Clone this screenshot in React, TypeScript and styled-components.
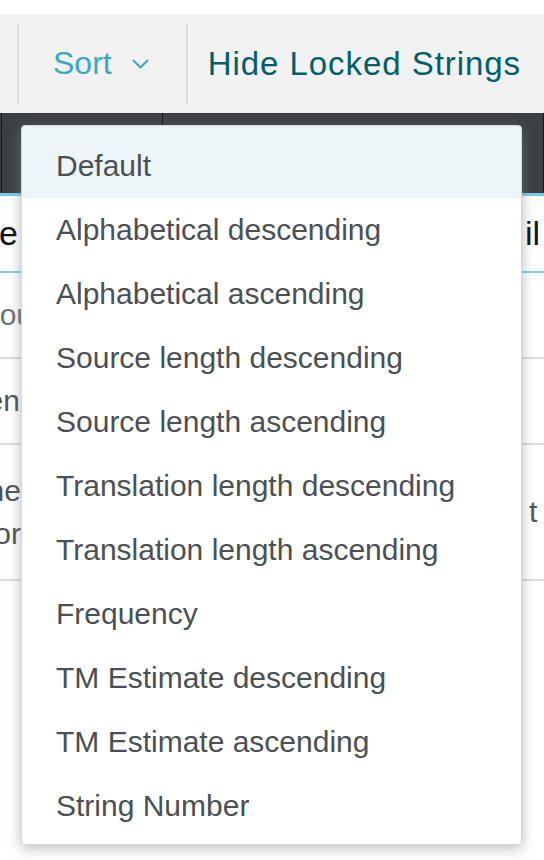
import styled, { createGlobalStyle } from 'styled-components';

// Sort options shown in the open dropdown
const sortOptions: string[] = [
	'Default',
	'Alphabetical descending',
	'Alphabetical ascending',
	'Source length descending',
	'Source length ascending',
	'Translation length descending',
	'Translation length ascending',
	'Frequency',
	'TM Estimate descending',
	'TM Estimate ascending',
	'String Number',
];

const GlobalStyle = createGlobalStyle`
	html, body {
		margin: 0;
		background: #ffffff;
		font-family: 'Liberation Sans', Arial, sans-serif;
	}
`;

const Chevron = () => (
	<svg width='17' height='11' viewBox='0 0 17 11' fill='none'>
		<polyline points='1.5,1.5 8.5,8.5 15.5,1.5' stroke='#3ba8c3' strokeWidth='2' strokeLinecap='round' strokeLinejoin='round' />
	</svg>
);

export default function App() {
	const selected = 0;

	return (
		<Page>
			<GlobalStyle />
			<Toolbar>
				<Divider />
				<SortButton>
					<span>Sort</span>
					<Chevron />
				</SortButton>
				<Divider />
				<HideButton>Hide Locked Strings</HideButton>
			</Toolbar>

			<Table>
				<HeadBand>
					<HeadCell />
					<HeadCell />
					<HeadCell />
				</HeadBand>
				<HeaderRow>
					<EdgeLeft $pad={15}>Source</EdgeLeft>
					<Middle />
					<EdgeRight $pad={3}>il</EdgeRight>
				</HeaderRow>
				<Row $height={84}>
					<EdgeLeft $pad={0} $faded>ou</EdgeLeft>
					<Middle />
					<EdgeRight $pad={0} />
				</Row>
				<Row $height={84}>
					<EdgeLeft $pad={13}>Token</EdgeLeft>
					<Middle />
					<EdgeRight $pad={0} />
				</Row>
				<Row $height={134}>
					<EdgeLeft $pad={12}>
						<Lines>
							<span>one</span>
							<span>for</span>
						</Lines>
					</EdgeLeft>
					<Middle />
					<EdgeRight $pad={7}>t</EdgeRight>
				</Row>
				<Row $height={300} />
			</Table>

			<Menu>
				{sortOptions.map((option, i) => (
					<MenuItem key={option} $active={i === selected} $first={i === 0}>
						{option}
					</MenuItem>
				))}
			</Menu>
		</Page>
	);
}

const Page = styled.div`
	position: relative;
	width: 544px;
	height: 860px;
	padding-top: 14px;
	box-sizing: border-box;
	overflow: hidden;
`;

const Toolbar = styled.div`
	height: 99px;
	background-color: #f1f1f1;
	display: flex;
	flex-direction: row;
	align-items: center;
	padding-left: 17px;
`;

const Divider = styled.div`
	width: 2px;
	height: 80px;
	background-color: #dcdcdc;
`;

const SortButton = styled.div`
	display: flex;
	align-items: center;
	gap: 20px;
	padding: 0 37px 0 34px;
	font-size: 32px;
	color: #3ba8c3;

	svg {
		margin-top: 2px;
	}
`;

const HideButton = styled.div`
	padding-left: 20px;
	font-size: 33px;
	letter-spacing: 0.95px;
	color: #00606a;
	white-space: nowrap;
`;

const Table = styled.div`
	display: flex;
	flex-direction: column;
`;

const HeadBand = styled.div`
	height: 80px;
	background-color: #3b4045;
	border-bottom: 3px solid #72cde6;
	display: grid;
	grid-template-columns: 2px 161px 1fr;
`;

const HeadCell = styled.div`
	border-right: 1px solid #15181a;
`;

const HeaderRow = styled.div`
	height: 75px;
	display: grid;
	grid-template-columns: 33px 1fr 22px;
	align-items: center;
	border-bottom: 2px solid #7fd0e8;
	font-size: 34px;
	color: #111111;
`;

const Row = styled.div<{ $height: number }>`
	height: ${(p) => p.$height}px;
	display: grid;
	grid-template-columns: 33px 1fr 22px;
	align-items: center;
	border-bottom: 2px solid #dddddd;
	font-size: 30px;
	color: #4e5457;
`;

const EdgeLeft = styled.div<{ $pad: number; $faded?: boolean }>`
	display: flex;
	justify-content: flex-end;
	overflow: hidden;
	white-space: nowrap;
	padding-right: ${(p) => p.$pad}px;
	color: ${(p) => (p.$faded ? '#6e7376' : 'inherit')};
`;

const Lines = styled.div`
	display: flex;
	flex-direction: column;
	align-items: flex-end;
	line-height: 43px;
`;

const Middle = styled.div``;

const EdgeRight = styled.div<{ $pad: number }>`
	overflow: hidden;
	white-space: nowrap;
	padding-left: ${(p) => p.$pad}px;
`;

const Menu = styled.div`
	position: absolute;
	top: 125px;
	left: 21px;
	width: 501px;
	height: 720px;
	box-sizing: border-box;
	background-color: #ffffff;
	border: 1px solid #d6d8d9;
	border-radius: 4px;
	box-shadow: 0 3px 14px rgba(125, 128, 130, 0.55);
	overflow: hidden;
	display: flex;
	flex-direction: column;
`;

const MenuItem = styled.div<{ $active: boolean; $first: boolean }>`
	height: 64px;
	line-height: 64px;
	padding-top: ${(p) => (p.$first ? '8px' : '0')};
	padding-left: 34px;
	font-size: 30px;
	color: #4a5053;
	white-space: nowrap;
	background-color: ${(p) => (p.$active ? '#ecf6f8' : 'transparent')};
`;
